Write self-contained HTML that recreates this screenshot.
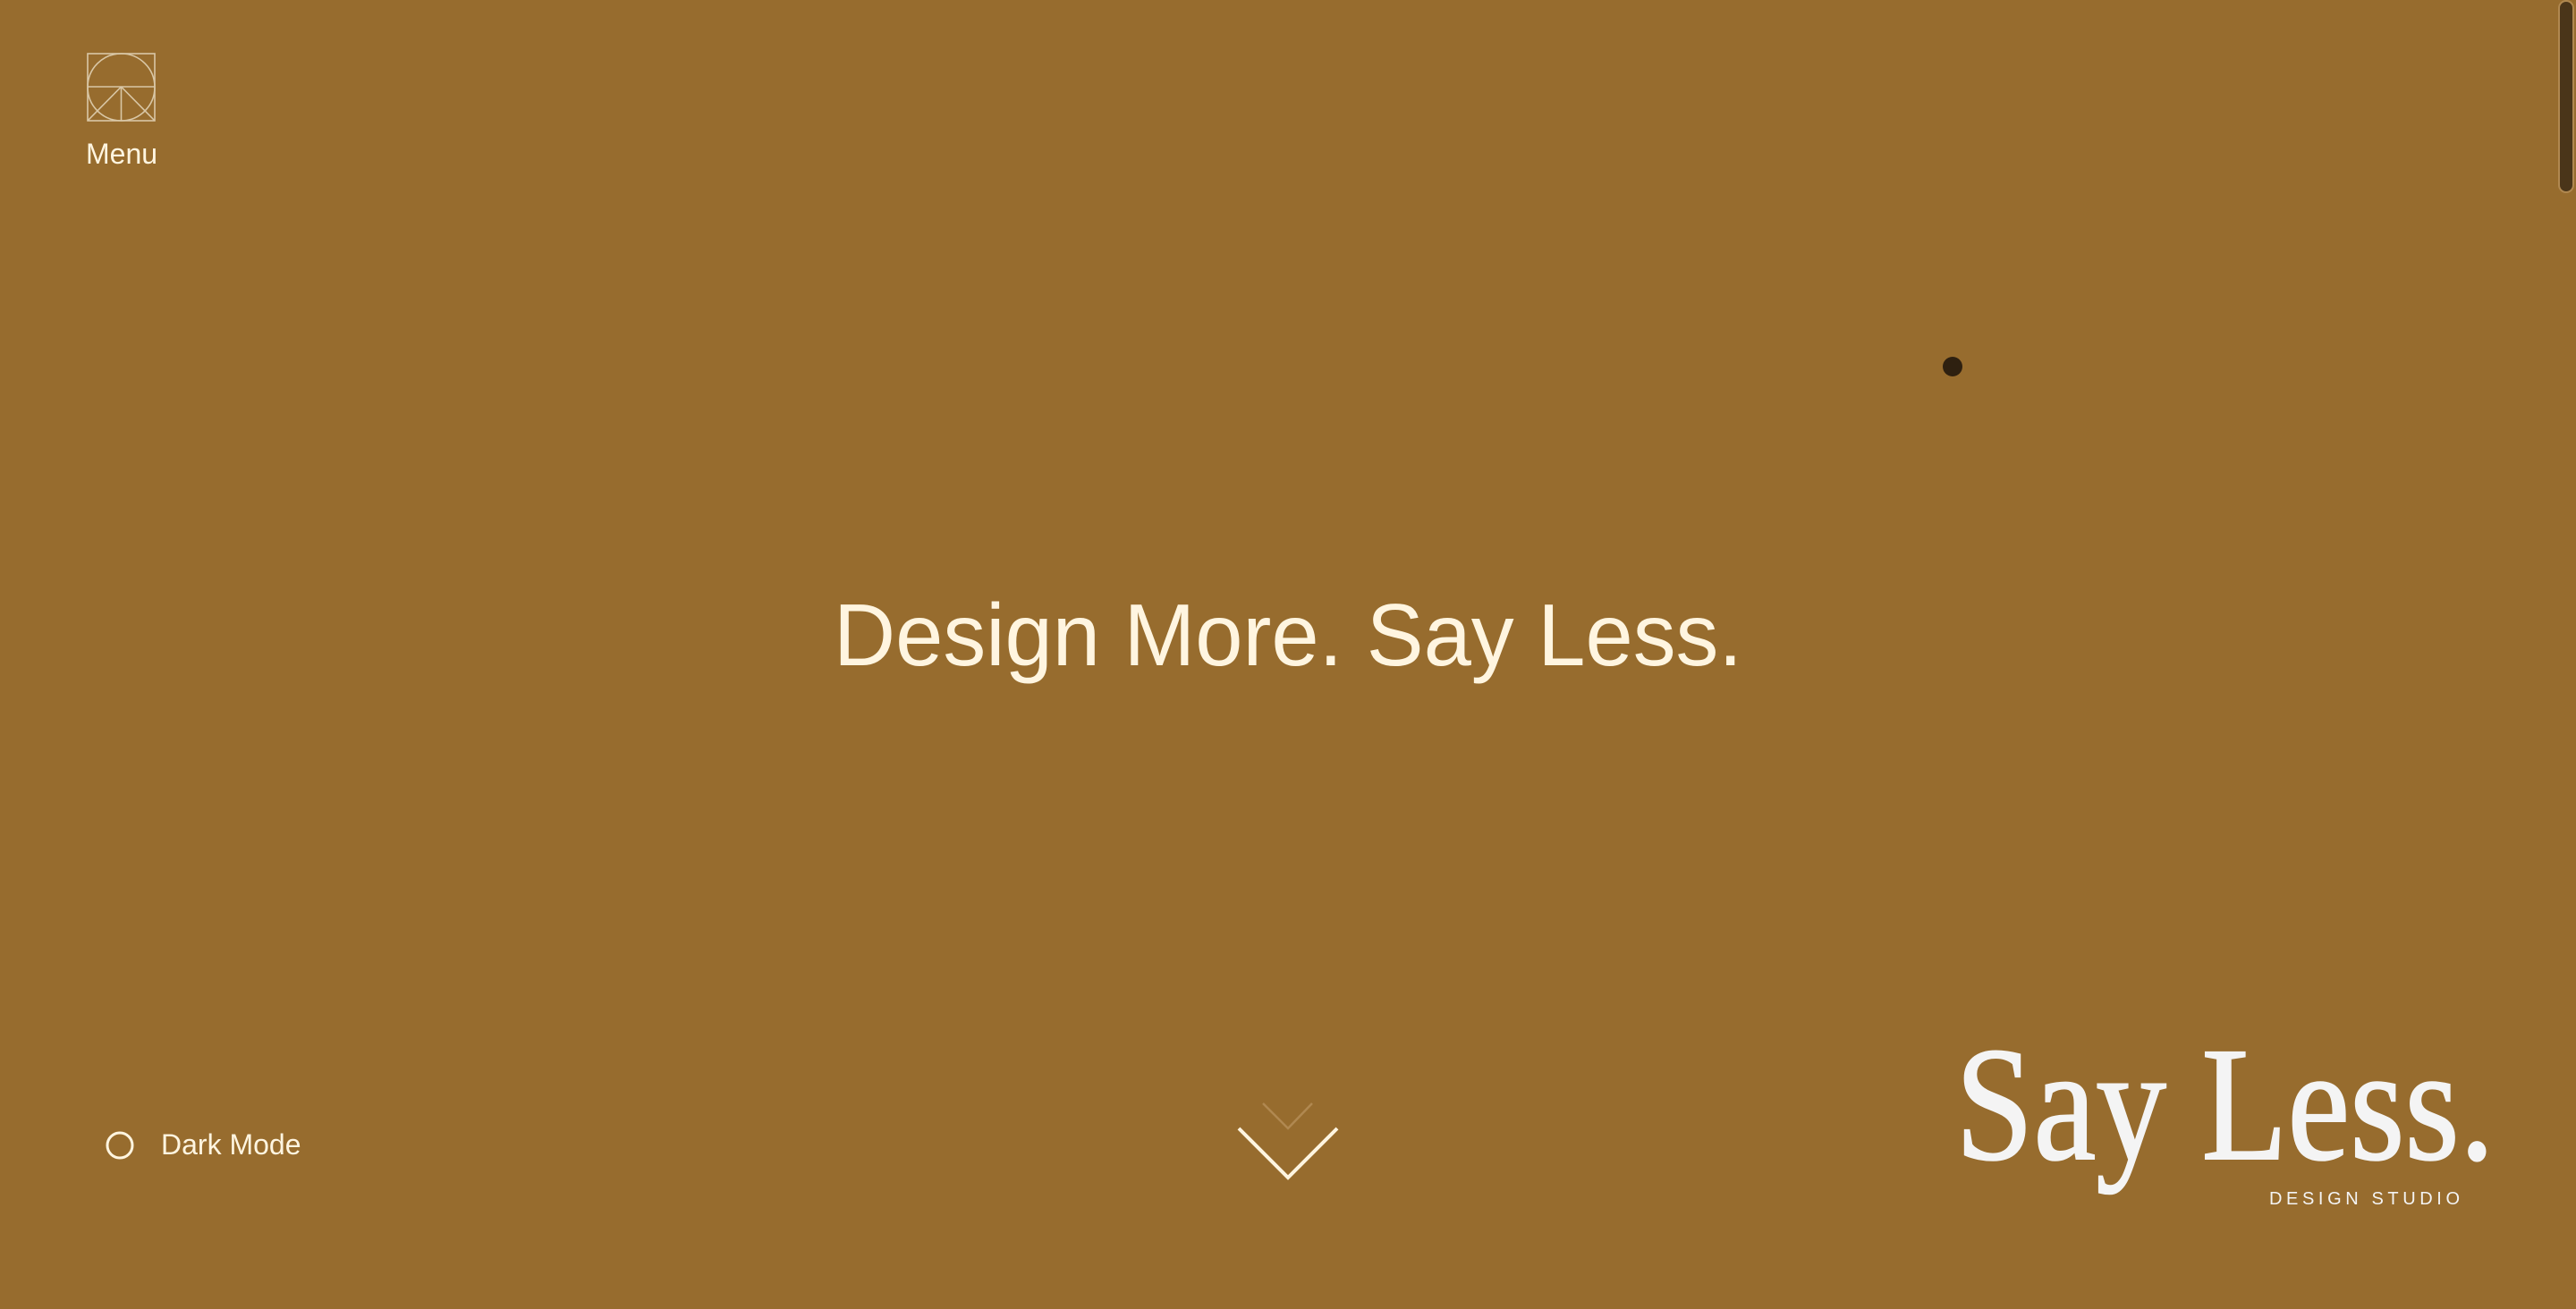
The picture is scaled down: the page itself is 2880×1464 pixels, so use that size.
<!DOCTYPE html>
<html><head><meta charset="utf-8"><style>
html,body{margin:0;padding:0;width:2880px;height:1464px;overflow:hidden;background:#976c2e;}
svg{position:absolute;left:0;top:0;}
</style></head><body>
<svg width="2880" height="1464" viewBox="0 0 2880 1464" xmlns="http://www.w3.org/2000/svg">
<rect width="2880" height="1464" fill="#976c2e"/>
<g fill="none" stroke="#d9c7a6" stroke-width="1.6">
<rect x="98" y="60" width="75" height="75"/>
<ellipse cx="135.5" cy="97.5" rx="37.5" ry="37.5"/>
<line x1="98" y1="97" x2="173" y2="97"/>
<line x1="135.5" y1="97" x2="135.5" y2="135"/>
<line x1="135.5" y1="97" x2="98" y2="135"/>
<line x1="135.5" y1="97" x2="173" y2="135"/>
</g>
<text x="96" y="183" font-family="Liberation Sans, sans-serif" font-size="32" fill="#fff5e0">Menu</text>
<text x="1440" y="744" text-anchor="middle" font-family="Liberation Sans, sans-serif" font-size="98" fill="#fff5e0" textLength="1016" lengthAdjust="spacingAndGlyphs">Design More. Say Less.</text>
<circle cx="2183" cy="410" r="11" fill="#2e2010"/>
<circle cx="134" cy="1281" r="14" fill="none" stroke="#fff5e0" stroke-width="3"/>
<text x="180" y="1291" font-family="Liberation Sans, sans-serif" font-size="32" fill="#fff5e0">Dark Mode</text>
<polyline points="1412,1234 1440,1262 1467,1234" fill="none" stroke="#b08850" stroke-width="2.5"/>
<polyline points="1385,1262 1440,1317 1495,1262" fill="none" stroke="#fff5e0" stroke-width="4"/>
<text x="2186" y="1296" font-family="Liberation Serif, serif" font-size="182" fill="#f4f4f4" stroke="#f4f4f4" stroke-width="2" textLength="603" lengthAdjust="spacingAndGlyphs">Say Less.</text>
<text x="2537" y="1347" font-family="Liberation Sans, sans-serif" font-size="20" fill="#f4f4f4" textLength="213" lengthAdjust="spacing">DESIGN STUDIO</text>
<rect x="2861" y="1" width="16" height="214" rx="8" fill="#4a3519" stroke="#b08850" stroke-width="2"/>
</svg>
</body></html>
